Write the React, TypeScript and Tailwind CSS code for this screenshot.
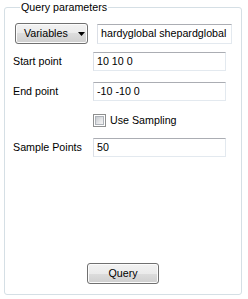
import React from "react";

const font = { fontFamily: '"Liberation Sans", Arial, sans-serif' };

function Field({ value, w, h }: { value: string; w: string; h: string }) {
  return (
    <div
      className={`${w} ${h} flex items-center border border-t-[#abadb3] border-l-[#dbdfe6] border-r-[#e3e9ef] border-b-[#e3e9ef] bg-white pl-[3px] text-[10.7px] leading-none text-black whitespace-nowrap overflow-hidden`}
    >
      {value}
    </div>
  );
}

function VistaButton({ children, className }: { children: React.ReactNode; className: string }) {
  return (
    <div
      className={`${className} flex items-center rounded-[3px] border border-[#707070] bg-[linear-gradient(to_bottom,#f2f2f2_0%,#ebebeb_50%,#dddddd_50%,#cfcfcf_100%)] shadow-[inset_0_0_0_1px_#fcfcfc] text-[10.7px] leading-none text-black`}
    >
      {children}
    </div>
  );
}

export default function App() {
  return (
    <div className="w-[248px] h-[299px] bg-white pl-[4px] pt-[1px]" style={font}>
      <fieldset className="w-[238px] h-[294px] border border-[#d5dfe5] rounded-[3px] pl-[8px]">
        <legend className="ml-[7px] px-[1px] text-[10.7px] leading-[13px] text-black">Query parameters</legend>
        <div className="flex flex-col">
          <div className="flex items-center mt-[9px]">
            <VistaButton className="ml-[2px] w-[73px] h-[21px] pl-[8px]">
              <span>Variables</span>
              <svg width="7" height="4" viewBox="0 0 7 4" className="ml-[10px]">
                <polygon points="0,0 7,0 3.5,4" fill="#000" />
              </svg>
            </VistaButton>
            <div className="ml-[9px]">
              <Field value="hardyglobal shepardglobal" w="w-[135px]" h="h-[20px]" />
            </div>
          </div>
          <div className="flex items-center mt-[8px]">
            <div className="w-[80px] text-[10.7px] leading-none text-black">Start point</div>
            <Field value="10 10 0" w="w-[133px]" h="h-[19px]" />
          </div>
          <div className="flex items-center mt-[11px]">
            <div className="w-[80px] text-[10.7px] leading-none text-black">End point</div>
            <Field value="-10 -10 0" w="w-[133px]" h="h-[19px]" />
          </div>
          <div className="flex items-center mt-[13px] ml-[80px]">
            <div className="w-[13px] h-[13px] border border-[#8e8f8f] bg-white p-[1px]">
              <div className="w-full h-full border border-[#aeb3b9] bg-[linear-gradient(135deg,#c6cacf_0%,#e6e7e9_60%,#f4f4f4_100%)]" />
            </div>
            <span className="ml-[4px] text-[10.7px] leading-none text-black">Use Sampling</span>
          </div>
          <div className="flex items-center mt-[11px]">
            <div className="w-[80px] text-[10.7px] leading-none text-black">Sample Points</div>
            <Field value="50" w="w-[133px]" h="h-[19px]" />
          </div>
          <div className="mt-[106px] ml-[74px]">
            <VistaButton className="w-[72px] h-[21px] justify-center">
              <span>Query</span>
            </VistaButton>
          </div>
        </div>
      </fieldset>
    </div>
  );
}
